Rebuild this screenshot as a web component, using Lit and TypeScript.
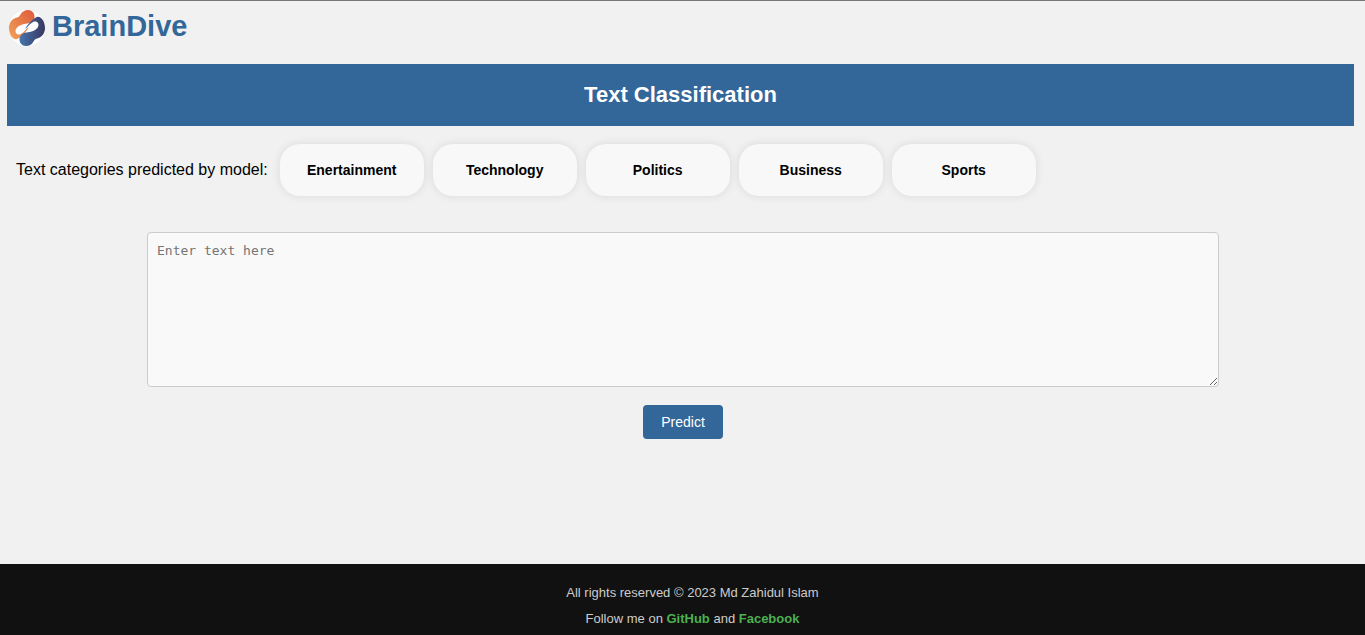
import { LitElement, html, css } from "lit";
import { customElement } from "lit/decorators.js";

const CATEGORIES = ["Enertainment", "Technology", "Politics", "Business", "Sports"];

@customElement("app-root")
export class AppRoot extends LitElement {
  static styles = css`
    :host {
      display: flex;
      flex-direction: column;
      min-height: 100vh;
      box-sizing: border-box;
      border-top: 1px solid #777;
      background: #f1f1f1;
      color: #000;
      font-family: "Liberation Sans", Arial, sans-serif;
      font-size: 16px;
    }
    .brand {
      display: flex;
      align-items: center;
      gap: 6px;
      padding: 8px 8px 17px;
    }
    .logo {
      width: 38px;
      height: 38px;
      display: block;
    }
    .name {
      margin: 0 0 4px;
      font-size: 29px;
      line-height: 34px;
      font-weight: bold;
      color: #336699;
    }
    .banner {
      margin: 0 11px 0 7px;
      padding: 16px;
      background: #336699;
      color: #fff;
      text-align: center;
    }
    .title {
      margin: 0;
      font-size: 22px;
      line-height: 30px;
    }
    .categories {
      display: flex;
      flex-wrap: wrap;
      align-items: center;
      gap: 12px;
      padding: 18px 16px 0;
    }
    .list {
      display: flex;
      flex-wrap: wrap;
      gap: 9px;
      margin: 0;
      padding: 0;
      list-style: none;
    }
    .card {
      width: 144px;
      padding: 16px 0;
      border-radius: 20px;
      background: #f8f8f8;
      box-shadow: 0 0 10px rgba(0, 0, 0, 0.1);
      font-size: 14px;
      line-height: 20px;
      font-weight: bold;
      text-align: center;
    }
    .form {
      display: flex;
      flex-direction: column;
      align-items: center;
      gap: 18px;
      padding: 36px 146px 24px 147px;
    }
    .input {
      display: block;
      box-sizing: border-box;
      width: 100%;
      height: 155px;
      margin: 0;
      padding: 10px 9px;
      border: 1px solid #ccc;
      border-radius: 4px;
      background: #f9f9f9;
      font-family: "DejaVu Sans Mono", monospace;
      font-size: 13px;
      line-height: 16px;
      resize: vertical;
    }
    .submit {
      padding: 8px 18px;
      border: 0;
      border-radius: 4px;
      background: #336699;
      color: #fff;
      font-family: inherit;
      font-size: 14px;
      line-height: 18px;
      cursor: pointer;
    }
    .footer {
      margin-top: auto;
      padding: 20px 0 8px 20px;
      background: #111;
      color: #ccc;
      font-size: 13px;
      line-height: 17px;
      text-align: center;
    }
    .line {
      margin: 0;
    }
    .line + .line {
      margin-top: 9px;
    }
    .link {
      color: #4caf50;
      font-weight: bold;
      text-decoration: none;
    }
  `;

  render() {
    return html`
      <header class="brand">
        <svg class="logo" viewBox="0 0 38 38" aria-hidden="true">
          <defs>
            <linearGradient id="warm" x1="0" y1="1" x2="1" y2="0">
              <stop offset="0" stop-color="#f2a257" />
              <stop offset="1" stop-color="#de5a3c" />
            </linearGradient>
            <linearGradient id="cool" x1="0" y1="0.5" x2="1" y2="0.5">
              <stop offset="0" stop-color="#38365f" />
              <stop offset="1" stop-color="#4575ad" />
            </linearGradient>
          </defs>
          <circle cx="19" cy="19" r="18" fill="#fdfdfd" />
          <path
            fill="url(#warm)"
            d="M12.500 5.500C14 2.500 17 1 20 1C24 1 26.500 4 26.500 7.500C26.500 11.500 23.500 14 19.500 14.500C15 15 10 16.500 8 20C6.500 23 8.500 26 11.500 25.500C14.500 25 17 21.500 20 18.500L20.500 19C17 23.500 13 29 8.500 30.300C4 30.500 1 24.500 1 19C1 13.500 4.500 9.500 9 8.500C11 8 11.700 7 12.500 5.500Z"
          />
          <path
            fill="url(#cool)"
            transform="rotate(180 19 19)"
            d="M12.500 5.500C14 2.500 17 1 20 1C24 1 26.500 4 26.500 7.500C26.500 11.500 23.500 14 19.500 14.500C15 15 10 16.500 8 20C6.500 23 8.500 26 11.500 25.500C14.500 25 17 21.500 20 18.500L20.500 19C17 23.500 13 29 8.500 30.300C4 30.500 1 24.500 1 19C1 13.500 4.500 9.500 9 8.500C11 8 11.700 7 12.500 5.500Z"
          />
        </svg>
        <h1 class="name">BrainDive</h1>
      </header>

      <div class="banner"><h2 class="title">Text Classification</h2></div>

      <section class="categories">
        <span>Text categories predicted by model:</span>
        <ul class="list">
          ${CATEGORIES.map((c) => html`<li class="card">${c}</li>`)}
        </ul>
      </section>

      <form class="form" @submit=${(e: Event) => e.preventDefault()}>
        <textarea class="input" name="text" aria-label="Text to classify" placeholder="Enter text here"></textarea>
        <button class="submit" type="submit">Predict</button>
      </form>

      <footer class="footer">
        <p class="line">All rights reserved © 2023 Md Zahidul Islam</p>
        <p class="line">
          Follow me on <a class="link" href="#github">GitHub</a> and
          <a class="link" href="#facebook">Facebook</a>
        </p>
      </footer>
    `;
  }
}
